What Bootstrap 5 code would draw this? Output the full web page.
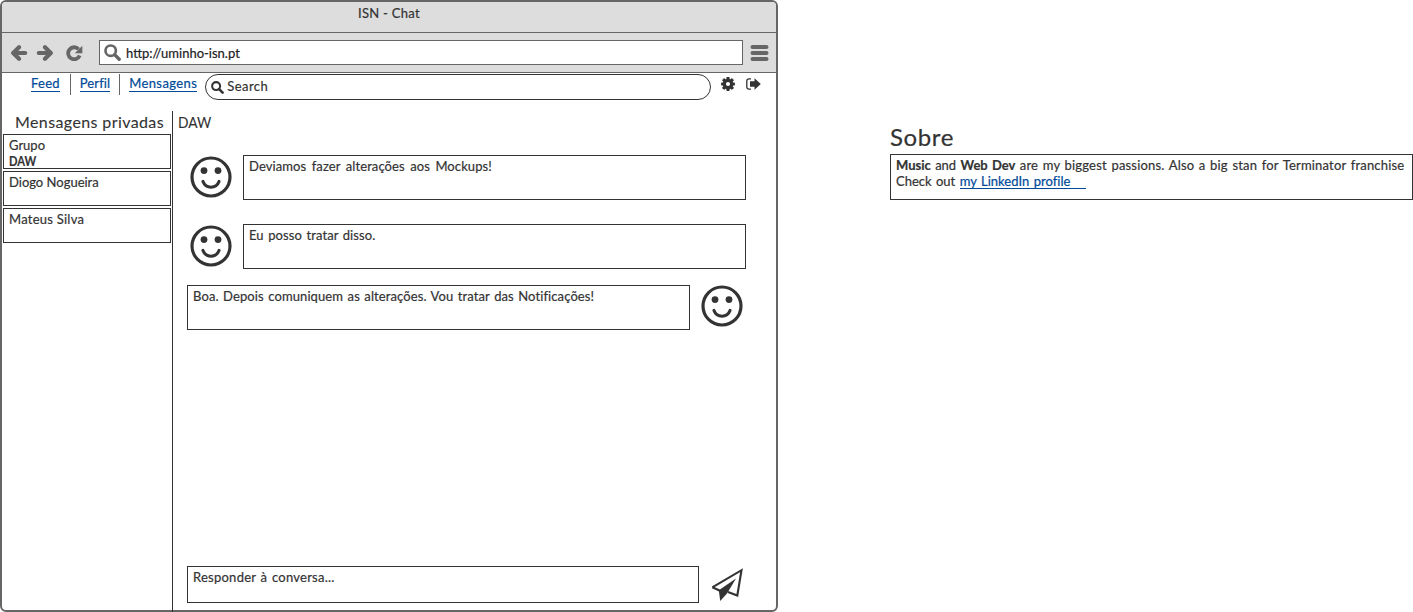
<!DOCTYPE html>
<html lang="pt">
<head>
<meta charset="utf-8">
<meta name="viewport" content="width=device-width, initial-scale=1">
<title>ISN - Chat</title>
<link href="https://cdn.jsdelivr.net/npm/bootstrap@5.3.0/dist/css/bootstrap.min.css" rel="stylesheet">
<style>
  :root { --ink: #333; --chrome: #666; --bar: #ddd; --anchor: #004a99; }
  body { font: 13px/16px Lato, "Open Sans", sans-serif; color: var(--ink); background: #fff; overflow: hidden; -webkit-text-stroke: .2px currentColor; }
  svg { display: block; flex: none; }

  .window-frame { width: 778px; height: 612px; border: 2px solid var(--chrome); border-radius: 6px; }
  .title-strip { height: 31px; background: var(--bar); border-bottom: 1px solid var(--chrome); padding-top: 3px; border-radius: 4px 4px 0 0; letter-spacing: .29px; }
  .tool-strip { height: 40px; background: var(--bar); border-bottom: 1px solid var(--chrome); padding: 0 7px 0 8px; color: var(--chrome); }
  .reload-icon { margin-left: 12px; }
  .url-box { height: 25px; border: 1px solid var(--chrome); background: #fff; padding-left: 4px; margin: 0 7px 0 16px; }
  .url-box span { color: #222; margin-left: 5px; }

  .site-nav { height: 38px; padding: 1px 15px 0 29px; }
  .site-nav a, .about-box a { color: var(--anchor); text-decoration: none; }
  .site-nav a { height: 17px; margin-top: 1px; border-bottom: 1px solid var(--anchor); }
  .nav-rule { width: 1px; height: 21px; background: var(--chrome); margin: 0 9px 0 10px; }
  .nav-rule + a + .nav-rule { margin-left: 9px; }
  .search-pill { width: 506px; height: 26px; border: 1px solid var(--ink); border-radius: 13px; margin-left: 8px; padding: 0 0 2px 5px; letter-spacing: .45px; }
  .search-pill svg { margin: 2px 3px 0 0; }
  .gear-icon { margin-top: 3px; }
  .exit-icon { margin: 4px 0 0 11px; }

  .side-list { width: 171px; margin-bottom: -2px; border-right: 1px solid var(--ink); padding: 0 1px; }
  .heading-text { font-size: 16px; line-height: 21px; height: 23px; -webkit-text-stroke-width: .1px; }
  .text-box { border: 1px solid var(--ink); padding: 2px 5px; white-space: nowrap; }
  .side-list .text-box { height: 35px; }
  .bubble { width: 503px; height: 45px; }
  .thread { padding: 0 29px 7px 14px; }
  .incoming { margin: 24px 1px 0 3px; }
  .heading-text + .incoming { margin-top: 21px; }
  .incoming svg { margin-top: 1px; }
  .outgoing { margin: 16px 4px 0 0; }
  .reply-box { width: 512px; height: 37px; }

  .about { width: 523px; margin-left: 112px; padding-top: 122px; }
  .about h2 { font-size: 24px; line-height: 30px; height: 32px; font-weight: 400; letter-spacing: .62px; margin: 0; }
  .about-box { height: 46px; padding-top: 3px; }
  .about-line { height: 16px; line-height: 15px; word-spacing: 1.05px; }
  .about-line span { letter-spacing: .19px; }
  .about-box a { display: inline-block; width: 126px; height: 15px; border-bottom: 1px solid var(--anchor); letter-spacing: .02px; vertical-align: top; }

  .narrow { display: inline-block; transform: scaleX(.86); transform-origin: 0 50%; }
  .ls-s { letter-spacing: .1px; }
  .ls-m { letter-spacing: .25px; }
  .ls-l { letter-spacing: .39px; }
  .ws-1 { word-spacing: 1.05px; }
  .ws-2 { word-spacing: 2px; }
</style>
</head>
<body>
<svg class="d-none">
  <symbol id="smile" viewBox="0 0 42 42">
    <circle cx="21" cy="21" r="19" fill="none" stroke="currentColor" stroke-width="3.2"/>
    <circle cx="14" cy="14.6" r="3.4" fill="currentColor"/>
    <circle cx="28" cy="14.6" r="3.4" fill="currentColor"/>
    <path d="M12.900 25.400C14.300 29 17.200 31.200 21 31.200s6.700-2.200 8.100-5.800" fill="none" stroke="currentColor" stroke-width="3" stroke-linecap="round"/>
  </symbol>
  <symbol id="lens" viewBox="0 0 16 16">
    <circle cx="6.300" cy="6.300" r="4.900" fill="none" stroke="currentColor" stroke-width="2.500"/>
    <path d="M10 10l4.300 4.300" stroke="currentColor" stroke-width="3.200" stroke-linecap="round"/>
  </symbol>
  <symbol id="arrow" viewBox="0 0 18 16">
    <path d="M9 2.300L3.200 8 9 13.700M4 8h11.200" fill="none" stroke="currentColor" stroke-width="4.200" stroke-linecap="round" stroke-linejoin="round"/>
  </symbol>
</svg>

<div class="d-flex align-items-start">
  <main class="window-frame d-flex flex-column flex-shrink-0">
    <header class="title-strip text-center">ISN - Chat</header>

    <div class="tool-strip d-flex align-items-center">
      <svg width="18" height="16"><use href="#arrow"/></svg>
      <svg width="18" height="16" class="ms-2"><use href="#arrow" transform="matrix(-1 0 0 1 18 0)"/></svg>
      <svg width="17" height="16" viewBox="0 0 17 16" class="reload-icon">
        <path d="M12.600 4.200A6 6 0 1 0 13.700 10.600" fill="none" stroke="currentColor" stroke-width="3.800"/>
        <path d="M16.300.8v7.400H8.800z" fill="currentColor"/>
      </svg>
      <div class="url-box d-flex align-items-center flex-grow-1">
        <svg width="17" height="17"><use href="#lens"/></svg>
        <span>http://uminho-isn.pt</span>
      </div>
      <svg width="19" height="16" viewBox="0 0 19 16"><path d="M2.500 2h14M2.500 8h14M2.500 14h14" stroke="currentColor" stroke-width="4" stroke-linecap="round"/></svg>
    </div>

    <nav class="site-nav d-flex align-items-start">
      <a href="#" class="ls-m">Feed</a><span class="nav-rule"></span>
      <a href="#" class="ls-s">Perfil</a><span class="nav-rule"></span>
      <a href="#" class="ls-l">Mensagens</a>
      <div class="search-pill d-flex align-items-center">
        <svg width="13" height="13"><use href="#lens"/></svg>Search
      </div>
      <svg width="14" height="14" viewBox="-7 -7 14 14" class="gear-icon ms-auto">
        <g fill="currentColor">
          <rect id="tooth" x="-1.600" y="-6.900" width="3.200" height="13.800" rx=".6"/>
          <use href="#tooth" transform="rotate(45)"/><use href="#tooth" transform="rotate(90)"/><use href="#tooth" transform="rotate(135)"/>
          <circle r="5.200"/>
        </g>
        <circle r="2.100" fill="#fff"/>
      </svg>
      <svg width="15" height="12" viewBox="0 0 15 12" class="exit-icon">
        <path d="M5 .9H2.800A2 2 0 0 0 .8 2.900v6.200a2 2 0 0 0 2 2H5" fill="none" stroke="currentColor" stroke-width="1.300"/>
        <path d="M4 3.300h4.500V.2L14.800 6 8.500 11.800V8.700H4z" fill="currentColor"/>
      </svg>
    </nav>

    <div class="d-flex flex-grow-1">
      <aside class="side-list d-flex flex-column flex-shrink-0">
        <div class="heading-text ls-l" style="padding-left:12px">Mensagens privadas</div>
        <div class="d-flex flex-column" style="gap:2px">
          <div class="text-box">Grupo<br><b class="narrow">DAW</b></div>
          <div class="text-box">Diogo Nogueira</div>
          <div class="text-box ls-m">Mateus Silva</div>
        </div>
      </aside>
      <section class="thread d-flex flex-column flex-grow-1">
        <div class="heading-text" style="margin-left:-9px"><span class="narrow">DAW</span></div>
        <div class="incoming d-flex justify-content-between">
          <svg width="42" height="42"><use href="#smile"/></svg>
          <div class="text-box bubble ls-s ws-2">Deviamos fazer alterações aos Mockups!</div>
        </div>
        <div class="incoming d-flex justify-content-between">
          <svg width="42" height="42"><use href="#smile"/></svg>
          <div class="text-box bubble ls-s ws-1">Eu posso tratar disso.</div>
        </div>
        <div class="outgoing d-flex justify-content-between">
          <div class="text-box bubble ls-s ws-1">Boa. Depois comuniquem as alterações. Vou tratar das Notificações!</div>
          <svg width="42" height="42"><use href="#smile"/></svg>
        </div>
        <div class="d-flex justify-content-between mt-auto" style="margin-right:3px">
          <div class="text-box reply-box ls-m ws-1">Responder à conversa...</div>
          <svg width="34" height="34" viewBox="0 0 34 34" style="margin-top:2px">
            <path d="M2.300 19.300L31.500 2.200 27.300 27.500 18 24M2.300 19.300L10 22.800" fill="none" stroke="currentColor" stroke-width="2.100"/>
            <path d="M8.800 22.300L26 10.500 17 25.500 10.200 33z" fill="currentColor"/>
          </svg>
        </div>
      </section>
    </div>
  </main>

  <section class="about">
    <h2>Sobre</h2>
    <div class="text-box about-box">
      <div class="about-line"><b>Music</b> and <b>Web Dev</b> <span>are my biggest passions. Also a big stan for Terminator franchise</span></div>
      <div class="about-line">Check out <a href="#">my LinkedIn profile</a></div>
    </div>
  </section>
</div>
<script src="https://cdn.jsdelivr.net/npm/bootstrap@5.3.0/dist/js/bootstrap.bundle.min.js"></script>
</body>
</html>
